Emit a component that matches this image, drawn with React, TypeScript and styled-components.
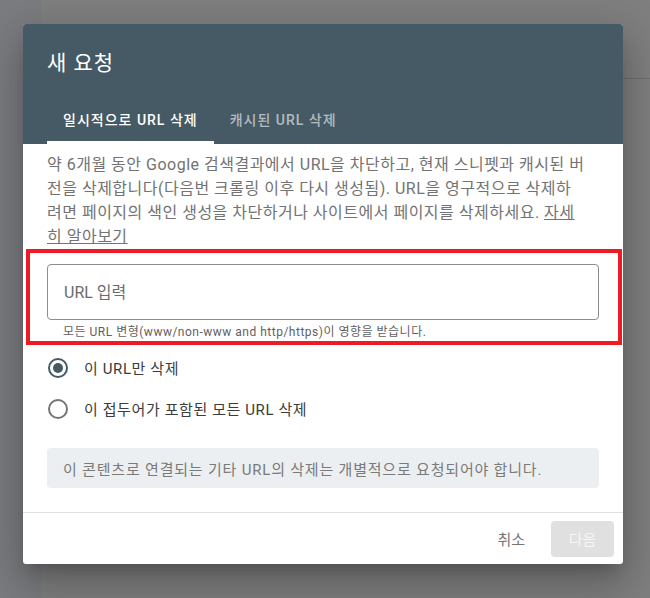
import React, { useState } from "react";
import styled, { createGlobalStyle } from "styled-components";

const GlobalStyle = createGlobalStyle`
    * {
        box-sizing: border-box;
    }
    body {
        margin: 0;
        font-family: Roboto, "Noto Sans CJK KR", sans-serif;
    }
`;

const FONT = `Roboto, "Noto Sans CJK KR", sans-serif`;

const App = () => {
    const [ tab, setTab ] = useState(0);
    const [ mode, setMode ] = useState("url");

    return (
        <Page>
            <GlobalStyle />
            <Sidebar />
            <Main>
                <TopBar />
            </Main>
            <Backdrop />
            <Dialog>
                <Header>
                    <Title>새 요청</Title>
                    <Tabs>
                        <Tab $active={ tab === 0 } onClick={ () => setTab(0) }>일시적으로 URL 삭제</Tab>
                        <Tab $active={ tab === 1 } onClick={ () => setTab(1) }>캐시된 URL 삭제</Tab>
                    </Tabs>
                </Header>
                <Body>
                    <Description>
                        약 6개월 동안 Google 검색결과에서 URL을 차단하고, 현재 스니펫과 캐시된 버<br />
                        전을 삭제합니다(다음번 크롤링 이후 다시 생성됨). URL을 영구적으로 삭제하<br />
                        려면 페이지의 색인 생성을 차단하거나 사이트에서 페이지를 삭제하세요. <LearnMore href="#">자세<br />히 알아보기</LearnMore>
                    </Description>
                    <Highlight>
                        <UrlInput placeholder="URL 입력" />
                        <Helper>모든 URL 변형(www/non-www and http/https)이 영향을 받습니다.</Helper>
                    </Highlight>
                    <RadioGroup>
                        <RadioRow onClick={ () => setMode("url") }>
                            <Radio $checked={ mode === "url" } />
                            <RadioLabel>이 URL만 삭제</RadioLabel>
                        </RadioRow>
                        <RadioRow onClick={ () => setMode("prefix") }>
                            <Radio $checked={ mode === "prefix" } />
                            <RadioLabel>이 접두어가 포함된 모든 URL 삭제</RadioLabel>
                        </RadioRow>
                    </RadioGroup>
                    <Notice>이 콘텐츠로 연결되는 기타 URL의 삭제는 개별적으로 요청되어야 합니다.</Notice>
                </Body>
                <Footer>
                    <CancelButton>취소</CancelButton>
                    <NextButton disabled>다음</NextButton>
                </Footer>
            </Dialog>
        </Page>
    );
};

export default App;

const Page = styled.div`
    position: relative;
    width: 650px;
    height: 598px;
    overflow: hidden;
    display: flex;
    background: #ffffff;
`;

const Sidebar = styled.div`
    width: 41px;
    background: #f7f8fe;
`;

const Main = styled.div`
    flex: 1;
    display: flex;
    flex-direction: column;
`;

const TopBar = styled.div`
    height: 79px;
    border-bottom: 1px solid #dadce0;
`;

const Backdrop = styled.div`
    position: absolute;
    inset: 0;
    background: rgba(0, 0, 0, 0.5);
`;

const Dialog = styled.div`
    position: absolute;
    left: 23px;
    top: 24px;
    width: 600px;
    height: 540px;
    display: flex;
    flex-direction: column;
    background: #ffffff;
    border-radius: 3px;
    overflow: hidden;
    font-family: ${FONT};
    box-shadow: 0 11px 15px -7px rgba(0, 0, 0, .2), 0 24px 38px 3px rgba(0, 0, 0, .14), 0 9px 46px 8px rgba(0, 0, 0, .12);
`;

const Header = styled.div`
    background: #455a64;
    padding: 25px 24px 0;
    display: flex;
    flex-direction: column;
`;

const Title = styled.h2`
    margin: 0;
    font-size: 21px;
    line-height: 28px;
    font-weight: 400;
    letter-spacing: 1px;
    color: #ffffff;
`;

const Tabs = styled.div`
    display: flex;
    margin-top: 19px;
`;

const Tab = styled.div<{ $active?: boolean }>`
    height: 48px;
    padding: 0 16px;
    display: flex;
    align-items: center;
    font-size: 14px;
    font-weight: 500;
    letter-spacing: 1px;
    cursor: pointer;
    color: ${ p => p.$active ? '#ffffff' : 'rgba(255, 255, 255, 0.6)' };
    border-bottom: 3px solid ${ p => p.$active ? '#ffffff' : 'transparent' };
`;

const Body = styled.div`
    padding: 9px 24px 24px;
    border-bottom: 1px solid #e0e0e0;
    display: flex;
    flex-direction: column;
`;

const Description = styled.p`
    margin: 0;
    font-size: 16px;
    line-height: 24px;
    letter-spacing: 0.5px;
    color: #737373;
    white-space: nowrap;
`;

const LearnMore = styled.a`
    color: inherit;
    text-decoration: underline;
`;

const Highlight = styled.div`
    margin: 0 -23px 0 -21px;
    padding: 11px 19px 1px 17px;
    border: 4px solid #ed1c24;
`;

const UrlInput = styled.input`
    display: block;
    width: 100%;
    height: 56px;
    padding: 0 16px;
    border: 1px solid #8c8c8c;
    border-radius: 4px;
    font-family: ${FONT};
    font-size: 16px;
    color: #202124;
    outline: none;
    &::placeholder {
        color: #6b6b6b;
    }
`;

const Helper = styled.div`
    padding: 4px 16px 0;
    font-size: 12px;
    line-height: 16px;
    letter-spacing: 0.5px;
    color: #5f5f5f;
`;

const RadioGroup = styled.div`
    display: flex;
    flex-direction: column;
    margin-top: 2px;
`;

const RadioRow = styled.label`
    height: 41px;
    display: flex;
    align-items: center;
    gap: 16px;
    padding-left: 1px;
    cursor: pointer;
`;

const Radio = styled.span<{ $checked?: boolean }>`
    width: 20px;
    height: 20px;
    border-radius: 50%;
    border: 2px solid ${ p => p.$checked ? '#455a64' : '#757575' };
    display: flex;
    align-items: center;
    justify-content: center;
    &::after {
        content: '';
        width: 10px;
        height: 10px;
        border-radius: 50%;
        background: ${ p => p.$checked ? '#455a64' : 'transparent' };
    }
`;

const RadioLabel = styled.span`
    font-size: 15px;
    letter-spacing: 0.6px;
    color: #3c3c3c;
`;

const Notice = styled.div`
    margin-top: 19px;
    height: 40px;
    padding: 0 16px;
    display: flex;
    align-items: center;
    background: #eceff1;
    border-radius: 4px;
    font-size: 15px;
    letter-spacing: 0.8px;
    color: #7a7a7a;
`;

const Footer = styled.div`
    flex: 1;
    display: flex;
    align-items: center;
    justify-content: flex-end;
    padding: 0 9px 0 0;
`;

const CancelButton = styled.button`
    height: 36px;
    padding: 0 16px;
    margin-right: 10px;
    border: none;
    background: transparent;
    font-family: ${FONT};
    font-size: 15px;
    color: #757575;
    cursor: pointer;
`;

const NextButton = styled.button`
    height: 36px;
    width: 63px;
    border: none;
    border-radius: 4px;
    background: #e0e0e0;
    font-family: ${FONT};
    font-size: 15px;
    color: #f7f7f7;
`;
